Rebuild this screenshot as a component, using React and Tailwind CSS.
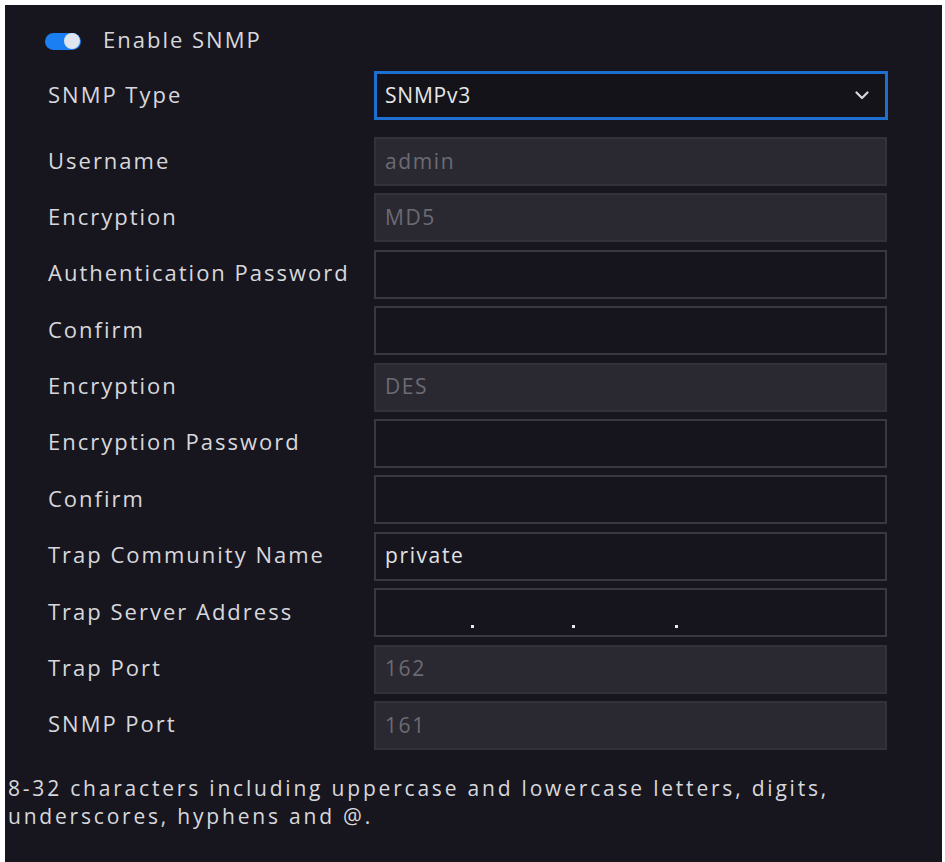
import React from "react";

const font = { fontFamily: '"Open Sans", "Noto Sans", sans-serif' };

function Field({ kind, value, ip }) {
  if (kind === "disabled") {
    return (
      <div className="h-[49px] w-[513px] bg-[#2a2932] border-2 border-[#33323b] flex items-center pl-[9px] text-[21px] tracking-[1.6px] text-[#6c6b73]">
        {value}
      </div>
    );
  }
  return (
    <div className="h-[49px] w-[513px] bg-[#16151d] border-2 border-[#393841] flex items-center pl-[9px] text-[21px] tracking-[1.6px] text-[#e2e2e6] relative">
      {value}
      {ip && (
        <div className="absolute left-0 top-[35px] w-full h-[4px]">
          <span className="absolute left-[95px] w-[3px] h-[3px] bg-[#e8e8e8]" />
          <span className="absolute left-[196px] w-[3px] h-[3px] bg-[#e8e8e8]" />
          <span className="absolute left-[299px] w-[3px] h-[3px] bg-[#e8e8e8]" />
        </div>
      )}
    </div>
  );
}

function Row({ label, children }) {
  return (
    <div className="flex items-center">
      <div className="w-[326px] text-[22px] tracking-[2px] text-[#d8d8dc] leading-none -mt-[4px] whitespace-nowrap">{label}</div>
      {children}
    </div>
  );
}

export default function App() {
  const rows = [
    ["Username", "disabled", "admin"],
    ["Encryption", "disabled", "MD5"],
    ["Authentication Password", "empty", ""],
    ["Confirm", "empty", ""],
    ["Encryption", "disabled", "DES"],
    ["Encryption Password", "empty", ""],
    ["Confirm", "empty", ""],
    ["Trap Community Name", "empty", "private"],
    ["Trap Server Address", "ip", ""],
    ["Trap Port", "disabled", "162"],
    ["SNMP Port", "disabled", "161"],
  ];
  return (
    <div className="w-[945px] h-[862px] bg-white pl-[5px] pt-[5px] pr-[3px] overflow-hidden" style={font}>
      <div className="h-full bg-[#17161f] flex flex-col">
        <div className="flex items-center h-[28px] mt-[22px] pl-[40px]">
          <div className="w-[36px] h-[17px] rounded-full bg-[#1a7ff2] flex items-center justify-end pr-[1px]">
            <div className="w-[16px] h-[16px] rounded-full bg-[#dfe5ee]" />
          </div>
          <span className="ml-[22px] text-[22px] tracking-[2px] text-[#d8d8dc] -mt-[4px]">Enable SNMP</span>
        </div>
        <div className="pl-[43px] mt-[16px]">
          <Row label="SNMP Type">
            <div className="h-[49px] w-[514px] bg-[#141319] border-[3px] border-[#1e6fd2] flex items-center pl-[8px] pr-[16px] justify-between text-[21px] tracking-[0.8px] text-[#e6e6ea]">
              <span>SNMPv3</span>
              <svg width="14" height="9" viewBox="0 0 14 9" fill="none">
                <polyline points="1.5,1.5 7,7 12.5,1.5" stroke="#d8d8dc" strokeWidth="2.2" strokeLinecap="round" strokeLinejoin="round" />
              </svg>
            </div>
          </Row>
          <div className="flex flex-col gap-[7.4px] mt-[17px]">
            {rows.map(([label, kind, value], i) => (
              <Row key={i} label={label}>
                <Field kind={kind === "ip" ? "empty" : kind} value={value} ip={kind === "ip"} />
              </Row>
            ))}
          </div>
        </div>
        <div className="mt-[24px] pl-[3px] text-[21px] leading-[28px] tracking-[2.8px] text-[#d8d8dc] whitespace-nowrap">
          <div>8-32 characters including uppercase and lowercase letters, digits,</div>
          <div>underscores, hyphens and @.</div>
        </div>
      </div>
    </div>
  );
}
